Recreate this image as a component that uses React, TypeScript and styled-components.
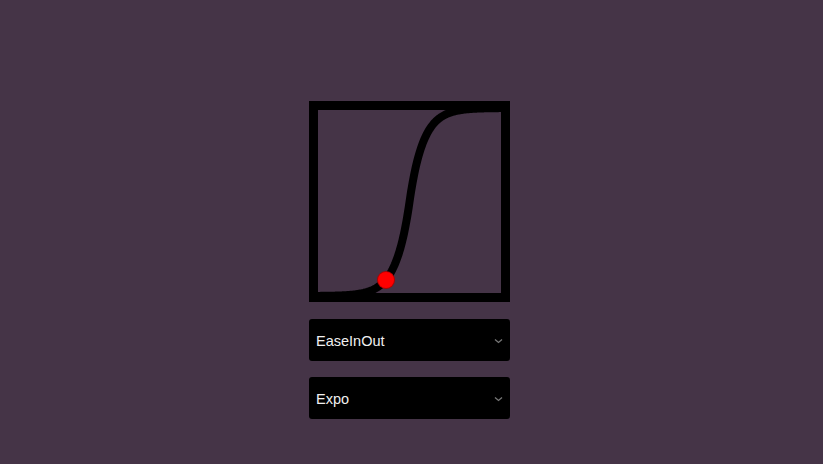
import React from "react";
import styled, { createGlobalStyle } from "styled-components";

const Global = createGlobalStyle`
  html, body { margin: 0; padding: 0; background: #453447; }
  body { font-family: "Liberation Sans", Arial, sans-serif; }
`;

const Page = styled.div`
  width: 823px;
  height: 464px;
  box-sizing: border-box;
  padding: 101px 0 0 309px;
  display: flex;
  flex-direction: column;
  gap: 16px;
`;

const Graph = styled.div`
  position: relative;
  width: 201px;
  height: 201px;
  box-sizing: border-box;
  border: 9px solid #000;
  margin-bottom: 1px;
`;

const CurveSvg = styled.svg`
  position: absolute;
  left: -9px;
  top: -9px;
  display: block;
  overflow: visible;
`;

const Dot = styled.div`
  position: absolute;
  width: 16px;
  height: 16px;
  border-radius: 50%;
  background: #ff0000;
  box-shadow: 0 0 0 1px #b00000;
  transform: translate(-50%, -50%);
`;

const Select = styled.div`
  width: 201px;
  height: 42px;
  box-sizing: border-box;
  background: #000;
  border-radius: 3px;
  display: flex;
  align-items: center;
  justify-content: space-between;
  padding: 1px 7px 0 7px;
  color: #f0f0f0;
  font-size: 14.5px;
`;

const Chevron = () => (
  <svg width="9" height="6" viewBox="0 0 9 6">
    <path d="M1 1.5 L4.5 4.5 L8 1.5" stroke="#777" strokeWidth="1.3" fill="none" />
  </svg>
);

function expo(t: number) {
  if (t <= 0) return 0;
  if (t >= 1) return 1;
  return t < 0.5 ? Math.pow(2, 20 * t - 10) / 2 : (2 - Math.pow(2, -20 * t + 10)) / 2;
}

export default function App() {
  const x0 = 7, x1 = 194, y0 = 195, y1 = 7;
  const pts: string[] = [];
  for (let i = 0; i <= 240; i++) {
    const t = i / 240;
    const x = x0 + t * (x1 - x0);
    const y = y0 - expo(t) * (y0 - y1);
    pts.push(`${x.toFixed(2)},${y.toFixed(2)}`);
  }
  return (
    <>
      <Global />
      <Page>
        <Graph>
          <CurveSvg width={201} height={201} viewBox="0 0 201 201">
            <polyline points={pts.join(" ")} fill="none" stroke="#000" strokeWidth="8" />
          </CurveSvg>
          <Dot style={{ left: 68, top: 170 }} />
        </Graph>
        <Select>
          <span>EaseInOut</span>
          <Chevron />
        </Select>
        <Select>
          <span>Expo</span>
          <Chevron />
        </Select>
      </Page>
    </>
  );
}
